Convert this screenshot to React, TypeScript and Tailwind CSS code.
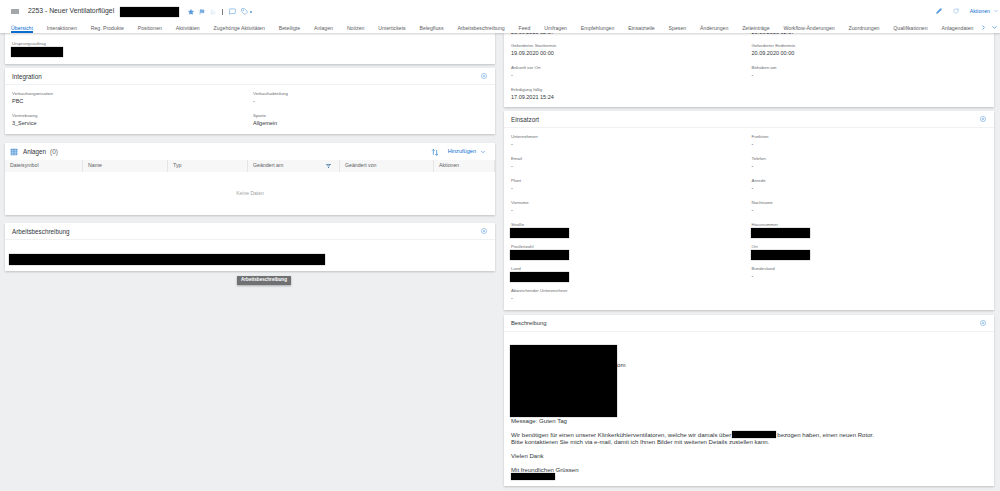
import {
  ChevronDown,
  ChevronRight,
  Flag,
  MessageSquare,
  Pencil,
  RotateCw,
  Rss,
  Star,
  Tag,
} from "lucide-react";

const tabs = [
  "Übersicht",
  "Interaktionen",
  "Reg. Produkte",
  "Positionen",
  "Aktivitäten",
  "Zugehörige Aktivitäten",
  "Beteiligte",
  "Anlagen",
  "Notizen",
  "Untertickets",
  "Belegfluss",
  "Arbeitsbeschreibung",
  "Feed",
  "Umfragen",
  "Empfehlungen",
  "Einsatzteile",
  "Spesen",
  "Änderungen",
  "Zeiteinträge",
  "Workflow-Änderungen",
  "Zuordnungen",
  "Qualifikationen",
  "Anlagendaten",
];

const columns = [
  { name: "Dateisymbol", width: "w-[78px]" },
  { name: "Name", width: "w-[85px]" },
  { name: "Typ", width: "w-[80px]" },
  { name: "Geändert am", width: "w-[92px]", filter: true },
  { name: "Geändert von", width: "w-[94px]" },
  { name: "Aktionen", width: "flex-1" },
];

const locationFields = [
  ["Unternehmen", "-", "Funktion", "-"],
  ["Email", "-", "Telefon", "-"],
  ["Plant", "-", "Anrede", "-"],
  ["Vorname", "-", "Nachname", "-"],
  ["Straße", null, "Hausnummer", null],
  ["Postleitzahl", null, "Ort", null],
  ["Land", null, "Bundesland", "-"],
  ["Abweichender Unterzeichner", "-"],
];

const Redacted = ({ className }: { className: string }) => (
  <div className={`bg-black shadow-[0_0_1px_rgba(0,0,0,0.6)] ${className}`} />
);

const CollapseIcon = () => (
  <svg viewBox="0 0 12 12" className="h-[6px] w-[6px] text-[#5b9bd9]" fill="none" stroke="currentColor">
    <circle cx="6" cy="6" r="5.2" strokeWidth="1" />
    <path d="M3.6 6 6 3.8 8.4 6M3.6 8.4 6 6.2 8.4 8.4" strokeWidth="1.1" />
  </svg>
);

const Card = ({
  title,
  titleSize = "text-[6.3px]",
  children,
}: {
  title: string;
  titleSize?: string;
  children: React.ReactNode;
}) => (
  <div className="bg-white shadow-[0_1px_2px_rgba(0,0,0,0.2)]">
    <div className="flex h-[17px] items-center justify-between border-b border-[#f0f1f2] pl-[7px] pr-[8px]">
      <span className={`pt-[1px] text-[#32363a] ${titleSize}`}>{title}</span>
      <CollapseIcon />
    </div>
    {children}
  </div>
);

const Field = ({ label, value }: { label: string; value: string | null }) => (
  <div className="h-[22px]">
    <div className="h-[7px] text-[4.4px] leading-[7px] text-[#6a6d70]">{label}</div>
    {value === null ? (
      <Redacted className="-ml-[1px] h-[10px] w-[59px]" />
    ) : (
      <div className="mt-[1px] h-[7px] text-[5.5px] leading-[7px] text-[#32363a]">{value}</div>
    )}
  </div>
);

const Header = () => (
  <header className="relative z-10 h-[33px] bg-white shadow-[0_1px_2px_rgba(0,0,0,0.2)]">
    <div className="flex h-[21px] items-center pl-[11px] pr-[1px] pt-[2px]">
      <div className="h-[5px] w-[8px] bg-[#a3a7aa]" />
      <h1 className="ml-[9px] w-[88px] whitespace-nowrap text-[6.8px] text-[#32363a]">2253 - Neuer Ventilatorflügel</h1>
      <Redacted className="ml-[4px] h-[10px] w-[59px]" />
      <div className="ml-[9px] flex items-center gap-[5px] text-[#5b9bd9]">
        <Star className="h-[6px] w-[6px]" fill="currentColor" />
        <Flag className="h-[6px] w-[6px] opacity-80" fill="currentColor" />
        <Rss className="h-[6px] w-[6px] opacity-40" />
        <div className="mx-[1px] h-[6px] w-px bg-[#777b7e]" />
        <MessageSquare className="h-[7px] w-[7px]" />
        <div className="flex items-center gap-[2px]">
          <Tag className="h-[7px] w-[7px]" />
          <span className="h-[2px] w-[2px] rounded-full bg-current" />
        </div>
      </div>
      <div className="ml-auto flex items-center text-[#0a6ed1]">
        <Pencil className="h-[6px] w-[6px] opacity-70" fill="currentColor" />
        <RotateCw className="ml-[11px] h-[6px] w-[6px] opacity-50" />
        <span className="ml-[11px] text-[5.2px]">Aktionen</span>
        <ChevronDown className="ml-[3px] h-[6px] w-[6px] opacity-60" />
      </div>
    </div>
    <nav className="flex h-[12px] items-start pl-[11px] text-[5.2px] leading-[14px] text-[#5c6064]">
      <div className="flex gap-[13.87px] whitespace-nowrap">
        {tabs.map((tab, i) => (
          <span
            key={tab}
            className={i === 0 ? "h-[12px] border-b-2 border-[#0a6ed1] text-[#0a6ed1]" : ""}
          >
            {tab}
          </span>
        ))}
      </div>
      <div className="ml-auto flex items-center gap-[4px] pr-[2px] pt-[3px] text-[#0a6ed1]">
        <ChevronRight className="h-[7px] w-[7px]" />
        <ChevronDown className="h-[7px] w-[7px]" />
      </div>
    </nav>
  </header>
);

const AttachmentsCard = () => (
  <div className="mt-[9px] bg-white shadow-[0_1px_2px_rgba(0,0,0,0.2)]">
    <div className="flex h-[17px] items-center pl-[5px] pr-[9px]">
      <svg viewBox="0 0 12 12" className="h-[8px] w-[8px] text-[#5b9bd9]" fill="currentColor">
        <path d="M2 1h8a1 1 0 0 1 1 1v8a1 1 0 0 1-1 1H2a1 1 0 0 1-1-1V2a1 1 0 0 1 1-1Z" />
        <path d="M1 4h10M1 6.5h10M1 9h10M4 1v10M8 1v10" stroke="#fff" strokeWidth="0.5" />
      </svg>
      <span className="ml-[5px] text-[6.3px] text-[#32363a]">Anlagen</span>
      <span className="ml-[4px] text-[6.3px] text-[#5c6064]">(0)</span>
      <svg viewBox="0 0 12 12" className="ml-auto h-[8px] w-[8px] text-[#0a6ed1]" fill="none" stroke="currentColor" strokeWidth="0.9">
        <path d="M3.5 10V2M1.5 4l2-2 2 2M8.5 3v8M6.5 9l2 2 2-2" />
      </svg>
      <span className="ml-[9px] text-[5.6px] text-[#0a6ed1]">Hinzufügen</span>
      <ChevronDown className="ml-[4px] h-[6px] w-[6px] text-[#0a6ed1]" />
    </div>
    <div className="flex h-[12px] bg-[#f7f7f7]">
      {columns.map((col) => (
        <div
          key={col.name}
          className={`flex items-center justify-between border-r border-[#e5e5e5] pl-[5px] pr-[8px] text-[5.2px] text-[#5c6064] ${col.width}`}
        >
          <span>{col.name}</span>
          {col.filter && (
            <svg viewBox="0 0 10 8" className="h-[4px] w-[5px] text-[#427cac]" fill="currentColor">
              <path d="M0 0h10v1.5H0ZM2 3h6v1.5H2ZM4 6h2v2H4Z" />
            </svg>
          )}
        </div>
      ))}
    </div>
    <div className="flex h-[43px] items-center justify-center text-[5px] text-[#a0a3a5]">Keine Daten</div>
  </div>
);

const LeftColumn = () => (
  <div className="w-[490px]">
    <div className="h-[31px] bg-white pl-[7px] pt-[8px] shadow-[0_1px_2px_rgba(0,0,0,0.2)]">
      <div className="h-[6px] text-[4.4px] leading-[6px] text-[#6a6d70]">Ursprungsauftrag</div>
      <Redacted className="-ml-[1px] h-[10px] w-[52px]" />
    </div>
    <div className="mt-[4px]">
      <Card title="Integration">
        <div className="grid h-[49px] grid-cols-2 pl-[7px] pr-[1px] pt-[5px]">
          <Field label="Verkaufsorganisation" value="PBC" />
          <Field label="Verkaufsabteilung" value="-" />
          <Field label="Vertriebsweg" value="3_Service" />
          <Field label="Sparte" value="Allgemein" />
        </div>
      </Card>
    </div>
    <AttachmentsCard />
    <div className="mt-[8px]">
      <Card title="Arbeitsbeschreibung">
        <div className="h-[31px] pl-[4px] pt-[14px]">
          <Redacted className="h-[11px] w-[316px]" />
        </div>
      </Card>
    </div>
    <div className="ml-[232px] mt-[5px] flex h-[9px] w-[54px] items-center justify-center bg-[#6f7173] text-[4.6px] font-bold text-white shadow-[0_1px_2px_rgba(0,0,0,0.3)]">
      Arbeitsbeschreibung
    </div>
  </div>
);

const RightColumn = () => (
  <div className="w-[490px]">
    <div className="grid h-[74px] grid-cols-2 bg-white pl-[7px] pr-[2px] shadow-[0_1px_2px_rgba(0,0,0,0.2)]">
      <div className="col-span-2 -mt-[4px] h-[13px] text-[5.5px] leading-[7px] text-[#32363a]">
        <div className="grid grid-cols-2">
          <span>20.09.2020 02:07</span>
          <span>20.09.2020 02:07</span>
        </div>
      </div>
      <Field label="Geforderter Starttermin" value="19.09.2020 00:00" />
      <Field label="Geforderter Endtermin" value="20.09.2020 00:00" />
      <Field label="Ankunft vor Ort" value="-" />
      <Field label="Behoben am" value="-" />
      <Field label="Erledigung fällig" value="17.09.2021 15:24" />
    </div>
    <div className="mt-[4px]">
      <Card title="Einsatzort">
        <div className="grid h-[182px] grid-cols-2 content-start pl-[7px] pr-[2px] pt-[5px]">
          {locationFields.map((row) => (
            <div key={row[0]} className="col-span-2 grid grid-cols-2">
              <Field label={row[0] as string} value={row[1]} />
              {row[2] && <Field label={row[2]} value={row[3]} />}
            </div>
          ))}
        </div>
      </Card>
    </div>
    <div className="mt-[5px]">
      <Card title="Beschreibung" titleSize="text-[5.8px]">
        <div className="h-[154px] pl-[7px] pt-[13px] text-[6.08px] leading-[7px] text-[#32363a]">
          <div className="flex h-[72px]">
            <Redacted className="-ml-[1px] h-[72px] w-[107px]" />
            <span className="pt-[16px]">om</span>
          </div>
          <p className="mt-[-0.5px]">Message: Guten Tag</p>
          <p className="mt-[7px] flex items-center">
            Wir benötigen für einen unserer Klinkerkühlerventilatoren, welche wir damals über
            <Redacted className="mx-[1px] h-[7px] w-[44px]" />
            bezogen haben, einen neuen Rotor.
          </p>
          <p>Bitte kontaktieren Sie mich via e-mail, damit ich Ihnen Bilder mit weiteren Details zustellen kann.</p>
          <p className="mt-[7px]">Vielen Dank</p>
          <p className="mt-[7px]">Mit freundlichen Grüssen</p>
          <Redacted className="h-[7px] w-[44px]" />
        </div>
      </Card>
    </div>
  </div>
);

export default function App() {
  return (
    <div className="flex h-[491px] w-[1000px] flex-col overflow-hidden bg-[#edeff0] font-['Liberation_Sans',Arial,sans-serif]">
      <Header />
      <main className="flex gap-[9px] pl-[5px]">
        <LeftColumn />
        <RightColumn />
      </main>
    </div>
  );
}
